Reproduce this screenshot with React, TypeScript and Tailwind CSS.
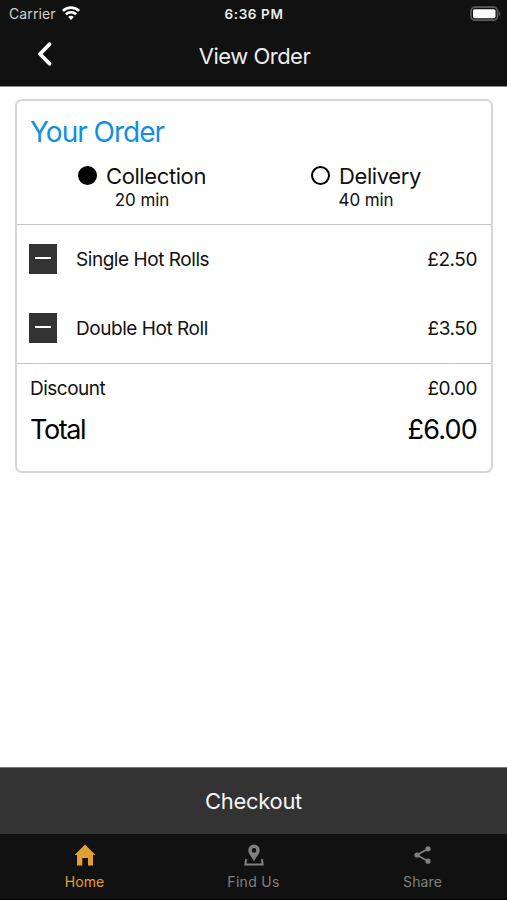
import clsx from 'clsx';

interface OrderItem {
  name: string;
  price: string;
}

const items: OrderItem[] = [
  { name: 'Single Hot Rolls', price: '£2.50' },
  { name: 'Double Hot Roll', price: '£3.50' },
];

function StatusBar() {
  return (
    <div className="grid h-7 grid-cols-3 items-center pr-[6px] pl-[9px]">
      <div className="flex items-center gap-[6px]">
        <span className="text-[14px] leading-7 tracking-[0.1px] text-[#d2d2d2]">Carrier</span>
        <svg width="18" height="14" viewBox="0 0 18 14" fill="none" stroke="#fff" strokeWidth="2.6" className="-mt-[2px]">
          <path d="M0.9 4.9a11.6 11.6 0 0 1 16.2 0" />
          <path d="M3.9 8.3a7.3 7.3 0 0 1 10.2 0" />
          <path d="M6.2 11a4 4 0 0 1 5.6 0L9 14z" fill="#fff" stroke="none" />
        </svg>
      </div>
      <span className="-ml-[2px] text-center text-[13.5px] leading-7 font-semibold tracking-[0.6px] text-[#ececec]">6:36 PM</span>
      <svg className="-mt-px justify-self-end" width="31" height="16" viewBox="0 0 31 16">
        <rect x="1" y="1.2" width="26.5" height="13" rx="4" fill="none" stroke="#5c5c5c" strokeWidth="1.7" />
        <rect x="3" y="3.2" width="22.5" height="9" rx="1.6" fill="#fff" />
        <path d="M29 5.5c1.6.6 1.6 4 0 4.6z" fill="#5c5c5c" />
      </svg>
    </div>
  );
}

function Header() {
  return (
    <header className="h-[87px] border-b border-[#8a8a8a] bg-[#111]">
      <StatusBar />
      <div className="grid h-[56px] grid-cols-[1fr_auto_1fr] items-center">
        <button className="-mt-[4px] ml-[36px] w-4" aria-label="Back">
          <svg width="17" height="26" viewBox="0 0 17 26" fill="none" stroke="#fff" strokeWidth="3.8" strokeLinecap="round" strokeLinejoin="round">
            <path d="M13.5 3.2L4 13l9.5 9.8" />
          </svg>
        </button>
        <h1 className="ml-[2px] text-[22px] tracking-[-0.5px] text-[#ececec]">View Order</h1>
      </div>
    </header>
  );
}

function Method({ label, time, selected }: { label: string; time: string; selected?: boolean }) {
  return (
    <div className="flex flex-col items-center">
      <div className="flex h-[28px] items-center gap-[9px]">
        <span className={clsx('-mt-[2px] size-[19px] rounded-full border-2 border-black', selected && 'bg-black')} />
        <span className="text-[22px] leading-7 tracking-[-0.4px]">{label}</span>
      </div>
      <span className="text-[17px] leading-5 tracking-[-0.1px]">{time}</span>
    </div>
  );
}

function OrderCard() {
  return (
    <section className="mt-[12px] mr-[14px] ml-[15px] h-[374px] rounded-[7px] border-2 border-[#d6d6d6] text-[#111]">
      <div className="h-[124px] border-b border-[#c4c4c4] px-[13px] pt-[13px]">
        <h2 className="text-[28px] leading-9 tracking-[-1px] text-[#128fe0]">Your Order</h2>
        <div className="mt-[12px] grid grid-cols-2">
          <Method label="Collection" time="20 min" selected />
          <Method label="Delivery" time="40 min" />
        </div>
      </div>

      <div className="border-b border-[#c4c4c4] pr-[14px] pl-[12px]">
        {items.map((item) => (
          <div key={item.name} className="flex h-[69px] items-center text-[19px] tracking-[-0.45px]">
            <button className="-mt-px flex h-[30px] w-7 items-center justify-center bg-[#333]" aria-label={`Remove ${item.name}`}>
              <span className="mb-[2px] h-[2px] w-4 bg-white" />
            </button>
            <span className="mt-px ml-[19px]">{item.name}</span>
            <span className="mt-px ml-auto">{item.price}</span>
          </div>
        ))}
      </div>

      <div className="pt-[10px] pr-[14px] pl-[13px]">
        <div className="flex h-[30px] items-center justify-between text-[19px] tracking-[-0.5px]">
          <span>Discount</span>
          <span>£0.00</span>
        </div>
        <div className="mt-[6px] flex h-[40px] items-center justify-between text-[27px] text-black">
          <span className="tracking-[-1.4px]">Total</span>
          <span className="tracking-[-0.8px]">£6.00</span>
        </div>
      </div>
    </section>
  );
}

function TabBar() {
  return (
    <nav className="grid h-[66px] grid-cols-3 border-b border-black bg-[#111] text-[14px] tracking-[0.1px] text-[#808080]">
      <a className="flex flex-col items-center pt-[9px] text-[#e39e35]">
        <svg width="24" height="24" viewBox="0 0 24 24" fill="currentColor">
          <path d="M12 1.5L22.5 12H20v10.5h-5V15H9.3v7.5H4V12H1.5z" />
        </svg>
        <span className="mt-[5px] leading-5">Home</span>
      </a>
      <a className="flex flex-col items-center pt-[9px]">
        <svg width="24" height="24" viewBox="0 0 24 24" fill="none">
          <path
            fill="currentColor"
            fillRule="evenodd"
            d="M12 1.5a5.7 5.7 0 0 0-5.700 5.700c0 4 3.600 6.300 5.700 11.300 2.100-5 5.700-7.300 5.700-11.300A5.700 5.700 0 0 0 12 1.500zm0 3.600a2.300 2.300 0 1 1 0 4.600 2.300 2.300 0 0 1 0-4.600z"
          />
          <path d="M4.200 16l-.9 5.400h17.400l-.9-5.400" stroke="currentColor" strokeWidth="2" />
        </svg>
        <span className="mt-[5px] leading-5 tracking-[0.3px]">Find Us</span>
      </a>
      <a className="flex flex-col items-center pt-[9px]">
        <svg width="24" height="24" viewBox="0 0 24 24" fill="currentColor">
          <path d="M17 5.800L6 12l11 6.200" fill="none" stroke="currentColor" strokeWidth="1.700" />
          <circle cx="17" cy="5.800" r="2.600" />
          <circle cx="6" cy="12" r="2.600" />
          <circle cx="17" cy="18.200" r="2.600" />
        </svg>
        <span className="mt-[5px] leading-5">Share</span>
      </a>
    </nav>
  );
}

export default function App() {
  return (
    <div className="flex h-[900px] w-full flex-col bg-white font-['Inter',sans-serif]">
      <Header />
      <main className="flex-1">
        <OrderCard />
      </main>
      <button className="h-[67px] border-t border-[#777] bg-[#333] text-[22px] tracking-[-0.3px] text-[#f5f5f5]">Checkout</button>
      <TabBar />
    </div>
  );
}
